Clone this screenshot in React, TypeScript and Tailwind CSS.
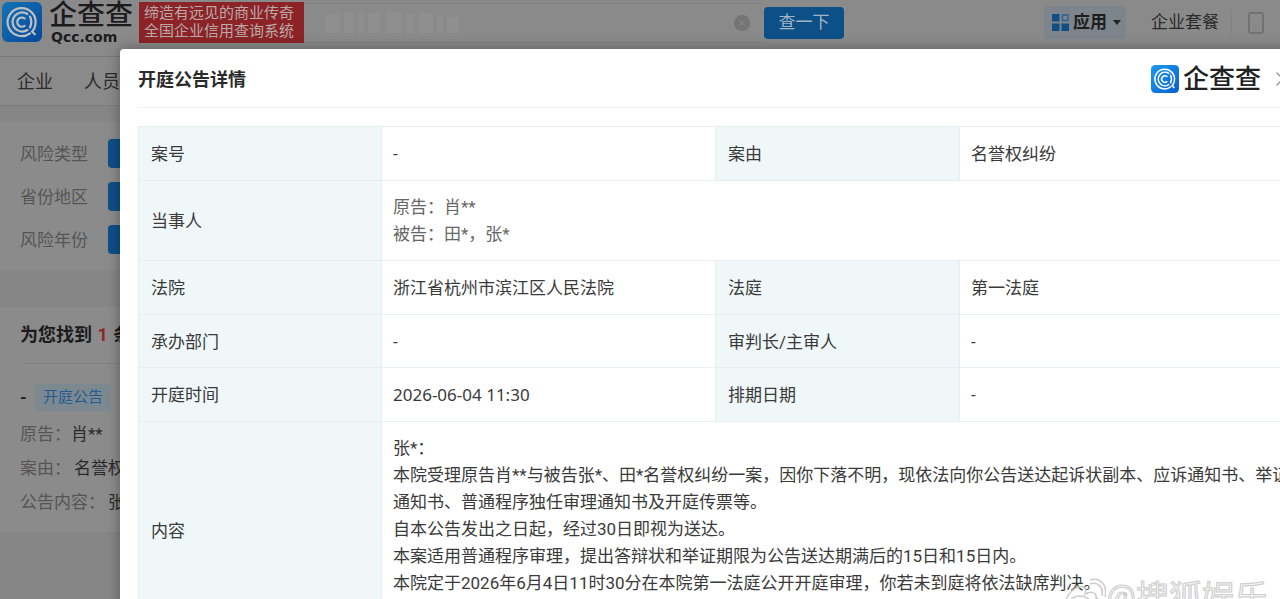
import { Smartphone, X } from "lucide-react";

interface Filter {
  id: string;
  label: string;
}

interface SummaryItem {
  label: string;
  value: string;
}

const filters: Filter[] = [
  { id: "type", label: "风险类型" },
  { id: "region", label: "省份地区" },
  { id: "year", label: "风险年份" },
];

const summary: SummaryItem[] = [
  { label: "原告：", value: "肖**" },
  { label: "案由：", value: "名誉权" },
  { label: "公告内容：", value: "张*" },
];

const notice = [
  "张*：",
  "本院受理原告肖**与被告张*、田*名誉权纠纷一案，因你下落不明，现依法向你公告送达起诉状副本、应诉通知书、举证",
  "通知书、普通程序独任审理通知书及开庭传票等。",
  "自本公告发出之日起，经过30日即视为送达。",
  "本案适用普通程序审理，提出答辩状和举证期限为公告送达期满后的15日和15日内。",
  "本院定于2026年6月4日11时30分在本院第一法庭公开开庭审理，你若未到庭将依法缺席判决。",
];

const LABEL_CELL = "border border-[#e4eef1] bg-[#eff7f9] px-3 pt-0.5 text-left font-normal";
const VALUE_CELL = "border border-[#e9eff1] px-[11px]";

function LogoMark({ className }: { className: string }) {
  return (
    <svg viewBox="0 0 40 40" className={className} aria-hidden="true">
      <defs>
        <linearGradient id="qcc" x1="0" y1="0" x2="1" y2="1">
          <stop offset="0" stopColor="#1a9bf0" />
          <stop offset="1" stopColor="#0a5fd0" />
        </linearGradient>
      </defs>
      <rect width="40" height="40" rx="6" fill="url(#qcc)" />
      <g fill="none" stroke="#fff" strokeWidth="2.2" strokeLinecap="round">
        <path d="M28 31.3A14 14 0 1 1 33.4 22.5Q33 26.5 30.2 29.5L32.8 32.2" />
        <path d="M25.4 28A9.6 9.6 0 1 1 25.4 12" />
        <path d="M28 14.6Q30.6 19.8 28 25.6" />
        <path d="M22.6 23.8A4.6 4.6 0 1 1 22.6 16.4" />
      </g>
    </svg>
  );
}

function TopBar() {
  return (
    <header className="flex h-[57px] items-start border-b border-[#797979]">
      <a href="#home" className="flex shrink-0 items-start pl-0.5 pt-0.5">
        <LogoMark className="size-10 brightness-75" />
        <span className="ml-[7px] flex w-[84px] flex-col text-[#1c1c1c]">
          <span className="text-[28px] font-medium leading-[28px]">企查查</span>
          <span className="pl-0.5 font-['DejaVu_Sans',sans-serif] text-[14px] font-bold leading-[14px]">Qcc.com</span>
        </span>
      </a>
      <p className="ml-1.5 mt-0.5 h-[41px] w-[165px] shrink-0 whitespace-nowrap bg-[#8c2427] px-[5px] pt-0.5 text-[15px] leading-[18px] text-[#b9a9a9]">
        缔造有远见的商业传奇
        <br />
        全国企业信用查询系统
      </p>
      <form className="flex min-w-0 flex-1 items-start">
        <div className="mt-[3px] flex h-10 min-w-0 flex-1 items-center border-y border-[#818181] pr-3">
          {/* redacted keyword */}
          <svg viewBox="0 0 140 24" className="ml-5 h-6 w-[140px]" fill="#959595" aria-hidden="true">
            <path d="M2 3h14v19H2zM20 1h10v21H20zM34 3h6v19h-6zM44 2h12v20H44zM62 1h16v21H62zM82 3h8v19h-8zM95 2h14v20H95zM113 4h6v18h-6zM123 6h12v16h-12z" opacity=".45" />
          </svg>
          <input aria-label="搜索" className="h-full min-w-0 flex-1 bg-transparent outline-none" />
          <button type="button" aria-label="清空" className="flex size-4 items-center justify-center rounded-full bg-[#747474] text-[#888888]">
            <X className="size-3" />
          </button>
        </div>
        <button type="button" className="ml-0.5 mt-[7px] h-8 w-20 rounded bg-[#0d4f87] text-[17px] text-[#a3b5c5]">
          查一下
        </button>
      </form>
      <nav className="ml-[200px] mt-1.5 flex shrink-0 items-center text-[17px] text-[#2a2a2a]">
        <button type="button" className="flex h-[33px] w-[82px] items-center rounded-sm bg-[#7d848b] pl-2 font-bold text-[#1d1d1d]">
          <svg viewBox="0 0 17 17" className="mr-1 size-[17px]" aria-hidden="true">
            <path d="M0 0h7.5v7.5H0zM0 9.5h7.5V17H0zM9.5 9.5H17V17H9.5z" fill="#114e86" />
            <path d="M10.5 1h5.5v5.5h-5.5z" fill="none" stroke="#2b618f" strokeWidth="1.4" />
          </svg>
          应用
          <svg viewBox="0 0 8 5" className="ml-1.5 h-[5px] w-2 shrink-0" aria-hidden="true">
            <path d="M0 0h8L4 5z" fill="#222" />
          </svg>
        </button>
        <a href="#plans" className="ml-[25px]">企业套餐</a>
        <a href="#mobile" aria-label="手机版" className="ml-3 mr-3 flex h-6 items-center border-l border-[#818181] pl-3 text-[#6a6a6a]">
          <Smartphone className="size-6" strokeWidth={1.5} />
        </a>
      </nav>
    </header>
  );
}

function ResultsPage() {
  return (
    <div className="h-full bg-[#868686]">
      <div className="bg-[#8a8a8a]">
        <TopBar />
        <nav className="flex h-[49px] items-center gap-[31px] border-b border-[#7c7c7c] pl-[17px] text-[18px] text-[#2c2c2c]">
          <a href="#company">企业</a>
          <a href="#people">人员</a>
        </nav>
      </div>

      <section className="mt-4 flex h-[148px] flex-col gap-[14px] bg-[#8b8b8b] pl-5 pt-[17px] text-[17px] text-[#555555]">
        {filters.map((filter) => (
          <div key={filter.id} className="flex h-[29px] items-center">
            <span className="w-[88px] pt-0.5">{filter.label}</span>
            <button type="button" aria-label={filter.label} className="h-[29px] w-14 rounded-sm bg-[#0d4f87]" />
          </div>
        ))}
      </section>

      <section className="mt-[37px] h-[225px] w-full bg-[#8b8b8b] pl-5 text-[17px]">
        <h2 className="h-[57px] border-b border-[#828282] pt-[14px] text-[18px] font-bold leading-7 text-[#1b1b1b]">
          为您找到 <span className="px-px text-[#8e2527]">1</span> 条
        </h2>
        <div className="mt-5 flex h-[27px] items-center text-[#1b1b1b]">
          <b className="w-[15px]">-</b>
          <span className="rounded-sm bg-[#7d8990] px-2 text-[15px] leading-[27px] text-[#255b92]">开庭公告</span>
        </div>
        <dl className="mt-1.5 leading-[34px]">
          {summary.map((item) => (
            <div key={item.label} className="flex gap-[3px] whitespace-nowrap first:gap-0">
              <dt className="text-[#555555]">{item.label}</dt>
              <dd className="text-[#2a2a2a]">{item.value}</dd>
            </div>
          ))}
        </dl>
      </section>
    </div>
  );
}

function DetailTable() {
  return (
    <table className="mt-[18px] w-full table-fixed border-collapse text-[17px] leading-[27px] text-[#3a3a3a]">
      <colgroup>
        <col className="w-[243px]" />
        <col className="w-[334px]" />
        <col className="w-[244px]" />
        <col />
      </colgroup>
      <tbody>
        <tr className="h-[54px]">
          <th scope="row" className={LABEL_CELL}>案号</th>
          <td className={`${VALUE_CELL} pt-0.5`}>-</td>
          <th scope="row" className={LABEL_CELL}>案由</th>
          <td className={`${VALUE_CELL} pt-0.5`}>名誉权纠纷</td>
        </tr>
        <tr className="h-20">
          <th scope="row" className={LABEL_CELL}>当事人</th>
          <td colSpan={3} className={`${VALUE_CELL} text-[#666666]`}>
            <p>原告：肖**</p>
            <p>被告：田*，张*</p>
          </td>
        </tr>
        <tr className="h-[54px]">
          <th scope="row" className={LABEL_CELL}>法院</th>
          <td className={`${VALUE_CELL} pt-0.5`}>浙江省杭州市滨江区人民法院</td>
          <th scope="row" className={LABEL_CELL}>法庭</th>
          <td className={`${VALUE_CELL} pt-0.5`}>第一法庭</td>
        </tr>
        <tr className="h-[53px]">
          <th scope="row" className={LABEL_CELL}>承办部门</th>
          <td className={`${VALUE_CELL} pt-0.5`}>-</td>
          <th scope="row" className={LABEL_CELL}>审判长/主审人</th>
          <td className={`${VALUE_CELL} pt-0.5`}>-</td>
        </tr>
        <tr className="h-[54px]">
          <th scope="row" className={LABEL_CELL}>开庭时间</th>
          <td className={`${VALUE_CELL} font-['Noto_Sans','Noto_Sans_CJK_SC',sans-serif]`}>2026-06-04 11:30</td>
          <th scope="row" className={LABEL_CELL}>排期日期</th>
          <td className={`${VALUE_CELL} pt-0.5`}>-</td>
        </tr>
        <tr className="h-[217px]">
          <th scope="row" className={LABEL_CELL}>内容</th>
          <td colSpan={3} className={`${VALUE_CELL} whitespace-nowrap pt-[13px] align-top`}>
            {notice.map((line) => (
              <p key={line}>{line}</p>
            ))}
          </td>
        </tr>
      </tbody>
    </table>
  );
}

function HearingDialog() {
  return (
    <div
      role="dialog"
      aria-labelledby="hearing-title"
      className="absolute -right-10 left-[120px] top-[49px] min-h-full rounded-tl bg-white px-[18px] shadow-[0_0_14px_rgba(0,0,0,0.35)]"
    >
      <div className="flex h-[59px] items-center border-b border-[#f3f3f3] pt-0.5">
        <h1 id="hearing-title" className="flex-1 text-[18px] font-bold text-[#2b2b2b]">开庭公告详情</h1>
        <LogoMark className="size-7" />
        <span className="ml-1 text-[26px] font-medium leading-7 text-[#222222]">企查查</span>
        <button type="button" aria-label="关闭" className="ml-2.5 mr-[7px] text-[#999999]">
          <X className="size-6" strokeWidth={1.5} />
        </button>
      </div>
      <DetailTable />
    </div>
  );
}

function Watermark() {
  return (
    <div className="pointer-events-none absolute right-3 top-[581px] flex items-start whitespace-nowrap">
      <svg viewBox="0 0 44 40" className="-mt-1 h-10 w-11" fill="none" stroke="#cccccc" strokeWidth="1.5" aria-hidden="true">
        <path d="M3 28C3 18 14 8 21 10c4 1 3 5 2 7 6-3 12-2 11 4 5 2 6 6 3 10-8 10-34 9-34-3z" />
        <path d="M28 7c8-3 14 4 12 12M28 3c11-3 18 6 15 17" />
        <ellipse cx="18" cy="27" rx="11" ry="8" />
      </svg>
      <span className="text-[33px] leading-[34px] text-[#f4f4f4] [-webkit-text-stroke:1px_#cccccc]">@搜狐娱乐</span>
    </div>
  );
}

export default function App() {
  return (
    <main className="relative h-screen overflow-hidden font-['Roboto','Noto_Sans_CJK_SC',sans-serif]">
      <ResultsPage />
      <HearingDialog />
      <Watermark />
    </main>
  );
}
